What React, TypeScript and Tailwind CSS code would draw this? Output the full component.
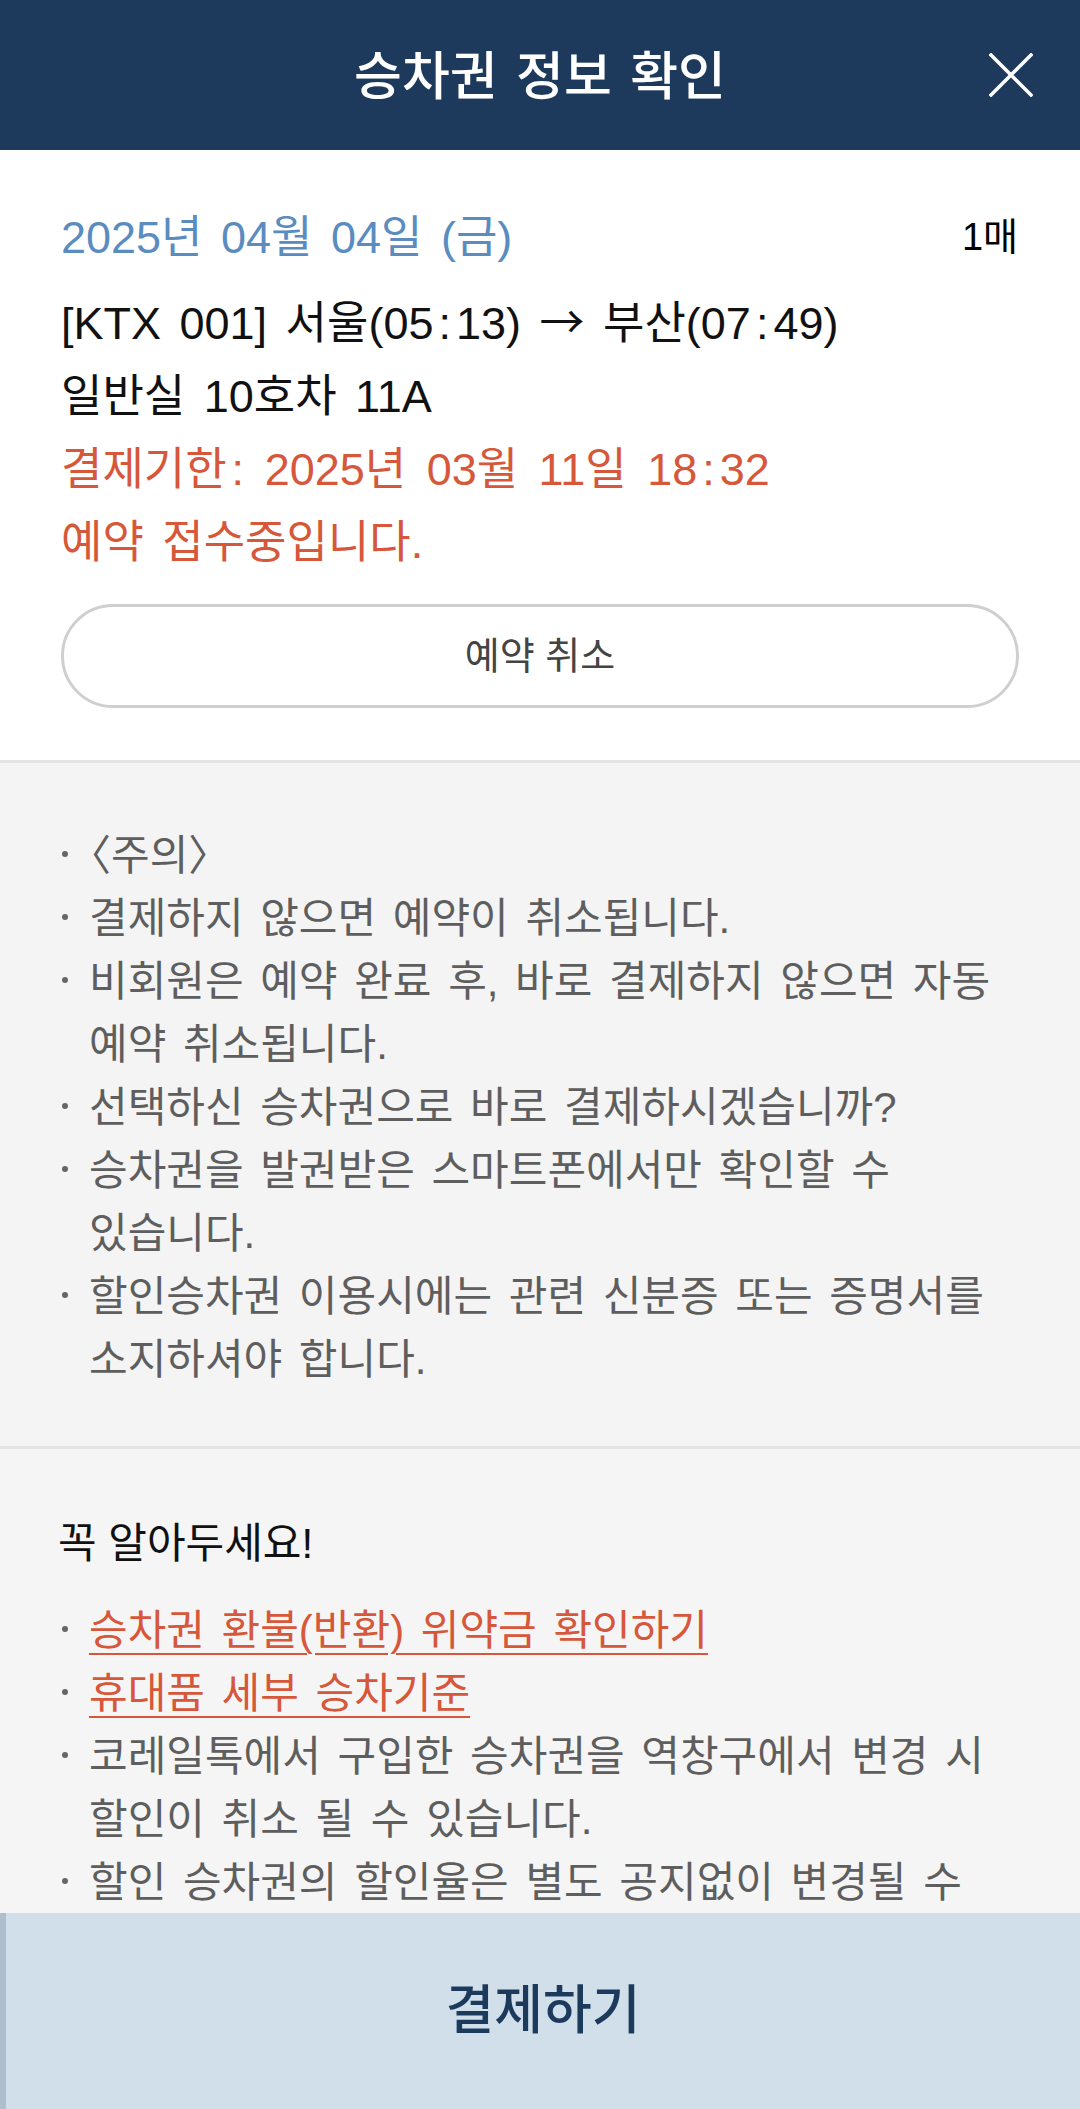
const FONT = "font-['Liberation_Sans','Noto_Sans_CJK_KR',sans-serif]";

const CloseIcon = () => (
  <svg width="44" height="44" viewBox="0 0 44 44" fill="none">
    <line x1="2" y1="2" x2="42" y2="42" stroke="white" strokeWidth="3.5" strokeLinecap="square" />
    <line x1="42" y1="2" x2="2" y2="42" stroke="white" strokeWidth="3.5" strokeLinecap="square" />
  </svg>
);

// the app draws time colons with room on both sides
const Colon = () => <span className="mx-[5px]">:</span>;

const Bullet: React.FC<{ children: React.ReactNode; className?: string }> = ({ children, className }) => (
  <div className="flex">
    <div className="w-[29px] h-[63px] flex items-center shrink-0">
      <div className="w-[6px] h-[6px] rounded-full bg-[#666666] -mt-[4px] ml-[2px]"></div>
    </div>
    <div className={className ?? 'text-[#5e5e5e]'}>{children}</div>
  </div>
);

const notes = [
  ['결제하지 않으면 예약이 취소됩니다.'],
  ['비회원은 예약 완료 후, 바로 결제하지 않으면 자동', '예약 취소됩니다.'],
  ['선택하신 승차권으로 바로 결제하시겠습니까?'],
  ['승차권을 발권받은 스마트폰에서만 확인할 수', '있습니다.'],
  ['할인승차권 이용시에는 관련 신분증 또는 증명서를', '소지하셔야 합니다.'],
];

const tips = [
  ['코레일톡에서 구입한 승차권을 역창구에서 변경 시', '할인이 취소 될 수 있습니다.'],
  ['할인 승차권의 할인율은 별도 공지없이 변경될 수', '있습니다.'],
];

const Lines: React.FC<{ lines: string[] }> = ({ lines }) => (
  <>
    {lines.map((l, i) => (
      <div key={i} className="whitespace-nowrap">{l}</div>
    ))}
  </>
);

export default function App() {
  return (
    <div className={`${FONT} w-[1080px] h-[2109px] flex flex-col overflow-hidden bg-white`}>
      {/* header */}
      <div className="h-[150px] shrink-0 bg-[#1d3a5c] grid grid-cols-[150px_1fr_150px] items-center">
        <div></div>
        <h1 className="text-center text-white text-[52px] font-medium [word-spacing:4px] pt-[4px]">승차권 정보 확인</h1>
        <div className="flex justify-end pr-[47px]">
          <CloseIcon />
        </div>
      </div>

      <div className="flex-1 overflow-hidden">
        {/* ticket info */}
        <div className="px-[61px] pt-[51px] pb-[52px] text-[45px] leading-[73px] [word-spacing:6px]">
          <div className="flex justify-between items-center h-[72px] mb-[14px]">
            <span className="text-[#5b8cbf]">2025년 04월 04일 (금)</span>
            <span className="text-[38px] text-black mr-[1px] [word-spacing:0px]">1매</span>
          </div>
          <div className="text-[#111111] whitespace-nowrap h-[73px]">
            [KTX 001] 서울(05<Colon />13) <span className="font-['Noto_Sans_CJK_KR'] leading-none">→</span> 부산(07<Colon />49)
          </div>
          <div className="text-[#111111]">일반실 10호차 11A</div>
          <div className="text-[#d6573a] whitespace-nowrap [word-spacing:8px]">
            결제기한<span className="ml-[5px]">:</span> 2025년 03월 11일 18<Colon />32
          </div>
          <div className="text-[#d6573a]">예약 접수중입니다.</div>
          <button className="mt-[25px] w-full h-[104px] rounded-full border-[3px] border-[#cfcfcf] bg-white text-[38px] text-[#444444] flex items-center justify-center [word-spacing:0px]">
            예약 취소
          </button>
        </div>

        {/* notice */}
        <div className="border-t-[3px] border-[#e4e4e4] bg-[#f4f4f4] pl-[60px] pr-[30px] pt-[61px] pb-[55px] text-[42px] leading-[63px] [word-spacing:5px]">
          <Bullet>
            <div className="whitespace-nowrap">
              <span className="-ml-[20px]">〈</span>주의<span className="-mr-[20px]">〉</span>
            </div>
          </Bullet>
          {notes.map((n, i) => (
            <Bullet key={i}>
              <Lines lines={n} />
            </Bullet>
          ))}
        </div>

        {/* must know */}
        <div className="border-t-[3px] border-[#e4e4e4] bg-[#f5f5f5] pl-[60px] pr-[30px] pt-[63px] text-[42px] leading-[63px] [word-spacing:5px]">
          <div className="-ml-[2px] text-[42px] text-[#111111] mb-[24px] [word-spacing:0px]">꼭 알아두세요!</div>
          <Bullet className="text-[#d6573a]">
            <span className="underline decoration-[2px] underline-offset-[8px] whitespace-nowrap">승차권 환불(반환) 위약금 확인하기</span>
          </Bullet>
          <Bullet className="text-[#d6573a]">
            <span className="underline decoration-[2px] underline-offset-[8px] whitespace-nowrap">휴대품 세부 승차기준</span>
          </Bullet>
          {tips.map((t, i) => (
            <Bullet key={i}>
              <Lines lines={t} />
            </Bullet>
          ))}
        </div>
      </div>

      {/* bottom action */}
      <div className="h-[196px] shrink-0 bg-[#d1dfeb] border-l-[6px] border-[#aebecd] flex items-center justify-center">
        <span className="text-[53px] font-medium text-[#1c3a5c]">결제하기</span>
      </div>
    </div>
  );
}
